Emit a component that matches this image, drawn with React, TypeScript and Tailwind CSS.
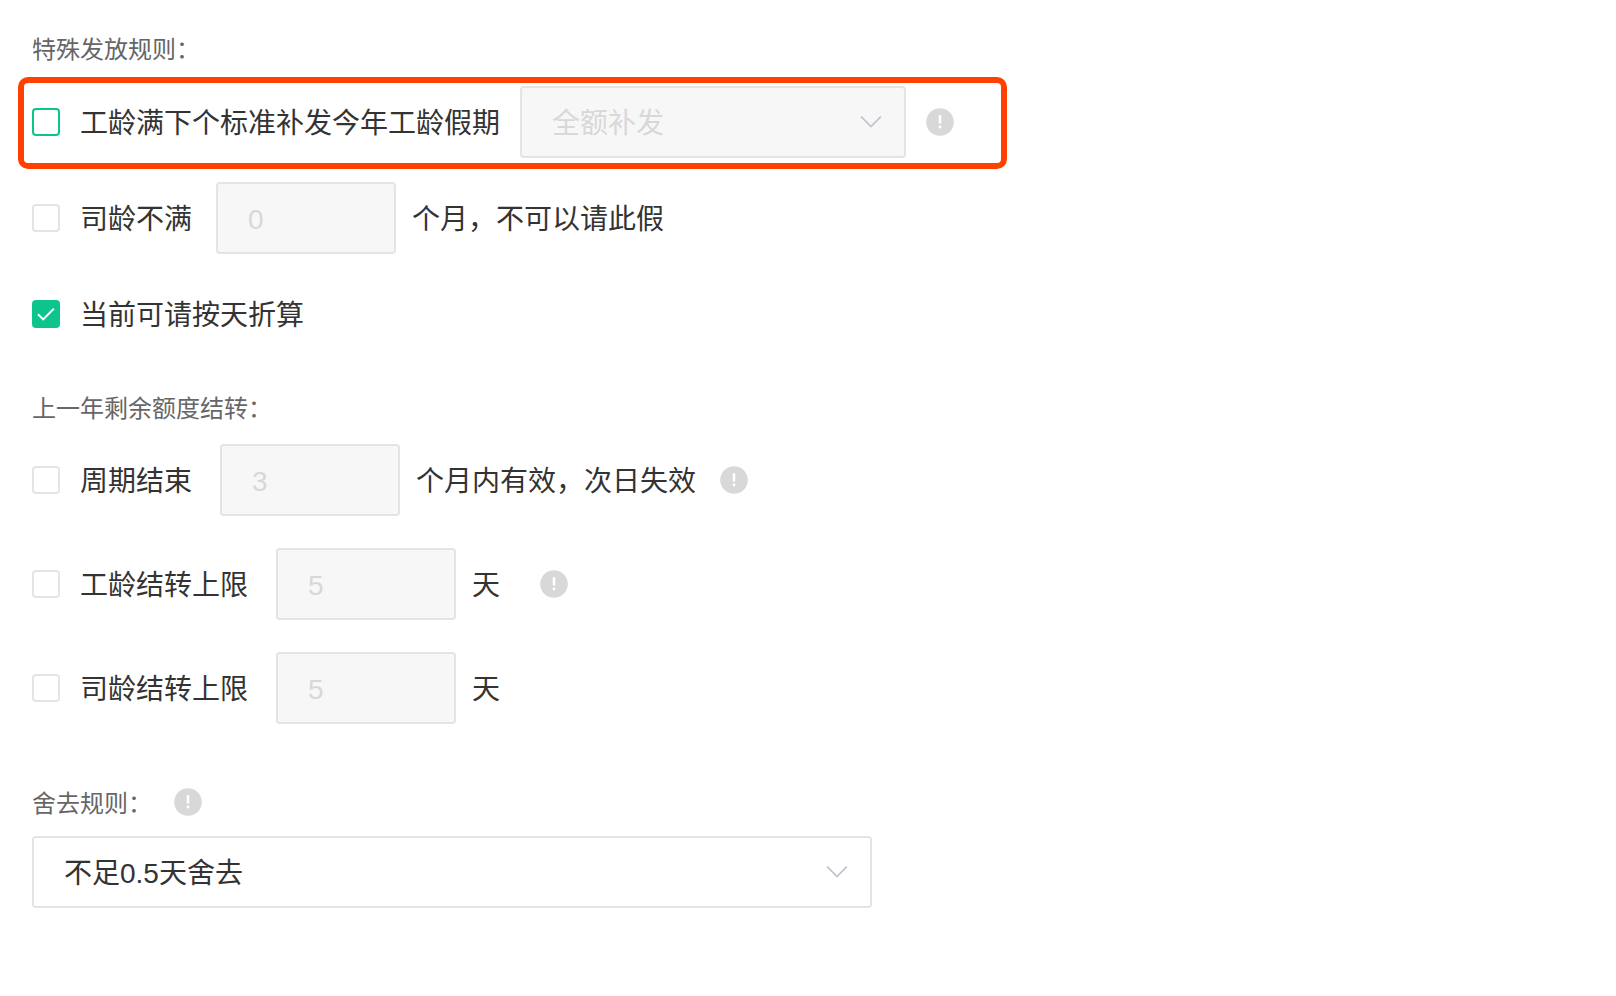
import React, { useState } from 'react';
import clsx from 'clsx';

const InfoIcon: React.FC<{ className?: string }> = ({ className }) => (
  <svg className={clsx('w-7 h-7 shrink-0', className)} viewBox="0 0 28 28" aria-hidden="true">
    <circle cx="14" cy="14" r="13.8" fill="#d8d8d8" />
    <path d="M14 8.2v6.2" stroke="#fff" strokeWidth="2.6" strokeLinecap="round" />
    <circle cx="14" cy="19" r="1.4" fill="#fff" />
  </svg>
);

interface CheckboxProps {
  label: string;
  defaultChecked?: boolean;
  active?: boolean;
}

const Checkbox: React.FC<CheckboxProps> = ({ label, defaultChecked = false, active = false }) => {
  const [checked, setChecked] = useState(defaultChecked);

  return (
    <label className="flex items-center gap-5 cursor-pointer">
      <span className="relative flex w-7 h-7 shrink-0">
        <input
          type="checkbox"
          checked={checked}
          onChange={(e) => setChecked(e.target.checked)}
          className={clsx(
            'appearance-none w-7 h-7 rounded border-2 bg-white cursor-pointer checked:bg-[#0dc58c] checked:border-[#0dc58c]',
            active ? 'border-[#0dc58c]' : 'border-[#e4e4e4]'
          )}
        />
        {checked && (
          <svg className="absolute inset-0 w-7 h-7 pointer-events-none" viewBox="0 0 28 28" fill="none">
            <path d="M6 14.2l5.2 5.2L21.8 8.8" stroke="#fff" strokeWidth="2" />
          </svg>
        )}
      </span>
      <span className="pt-1">{label}</span>
    </label>
  );
};

interface NumberBoxProps {
  value: string;
  label: string;
  className?: string;
}

const NumberBox: React.FC<NumberBoxProps> = ({ value, label, className }) => (
  <input
    type="text"
    disabled
    value={value}
    aria-label={label}
    readOnly
    className={clsx(
      'w-[180px] h-[72px] mr-4 px-[30px] pt-1 rounded border-2 border-[#e4e4e4] bg-[#f7f7f7] text-[#d8d8d8]',
      className
    )}
  />
);

interface SelectProps {
  options: string[];
  label: string;
  disabled?: boolean;
  className?: string;
}

const Select: React.FC<SelectProps> = ({ options, label, disabled, className }) => (
  <div className={clsx('relative', className)}>
    <select
      aria-label={label}
      disabled={disabled}
      className="appearance-none w-full h-[72px] px-[30px] pt-1 rounded border-2 border-[#e4e4e4] bg-white text-[#333] disabled:bg-[#f7f7f7] disabled:text-[#d8d8d8] disabled:opacity-100"
    >
      {options.map((option) => (
        <option key={option}>{option}</option>
      ))}
    </select>
    <svg
      className="absolute right-6 top-6 w-[22px] h-6 pointer-events-none"
      viewBox="0 0 22 24"
      fill="none"
      stroke="#c0c4cc"
      strokeWidth="1.7"
    >
      <path d="M1.2 6.6l9.8 10 9.8-10" />
    </svg>
  </div>
);

const SectionTitle: React.FC<{ children: React.ReactNode }> = ({ children }) => (
  <h2 className="pt-1 text-2xl leading-[30px] text-[#666]">{children}</h2>
);

export default function App() {
  return (
    <main className="min-h-screen bg-white px-8 pt-[31px] pb-20 font-['Liberation_Sans','Noto_Sans_CJK_SC',sans-serif] text-[28px] leading-10 text-[#333]">
      <section>
        <SectionTitle>特殊发放规则：</SectionTitle>

        {/* Highlighted rule */}
        <div className="flex w-fit items-center -ml-3.5 mt-3 pl-2 pr-[47px] pt-[3px] pb-[5px] rounded-[10px] border-6 border-[#ff4000]">
          <Checkbox label="工龄满下个标准补发今年工龄假期" active />
          <Select className="w-[386px] ml-5" label="补发方式" options={['全额补发']} disabled />
          <InfoIcon className="ml-5" />
        </div>

        <div className="flex items-center mt-[13px]">
          <Checkbox label="司龄不满" />
          <NumberBox className="ml-6" label="司龄月数" value="0" />
          <span className="pt-1">个月，不可以请此假</span>
        </div>

        <div className="flex items-center h-[72px] mt-6">
          <Checkbox label="当前可请按天折算" defaultChecked />
        </div>
      </section>

      <section className="mt-10">
        <SectionTitle>上一年剩余额度结转：</SectionTitle>

        <div className="flex flex-col gap-8 mt-5">
          <div className="flex items-center">
            <Checkbox label="周期结束" />
            <NumberBox className="ml-7" label="有效月数" value="3" />
            <span className="pt-1">个月内有效，次日失效</span>
            <InfoIcon className="ml-6" />
          </div>

          <div className="flex items-center">
            <Checkbox label="工龄结转上限" />
            <NumberBox className="ml-7" label="工龄结转天数" value="5" />
            <span className="pt-1">天</span>
            <InfoIcon className="ml-10" />
          </div>

          <div className="flex items-center">
            <Checkbox label="司龄结转上限" />
            <NumberBox className="ml-7" label="司龄结转天数" value="5" />
            <span className="pt-1">天</span>
          </div>
        </div>
      </section>

      <section className="mt-[61px]">
        <div className="flex items-center gap-[22px]">
          <SectionTitle>舍去规则：</SectionTitle>
          <InfoIcon />
        </div>
        <Select
          className="w-full max-w-[840px] mt-[17px]"
          label="舍去规则"
          options={['不足0.5天舍去', '不足1天舍去']}
        />
      </section>
    </main>
  );
}
